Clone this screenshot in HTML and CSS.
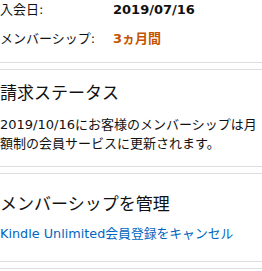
FILE: index.html
```html
<!DOCTYPE html>
<html lang="ja">
<head>
    <meta charset="UTF-8">
    <meta name="viewport" content="width=device-width, initial-scale=1.0">
    <title>メンバーシップ</title>
    <link rel="stylesheet" href="styles.css">
</head>
<body>
    <div class="info">
        <div class="row">
            <span class="label">入会日:</span>
            <span class="value">2019/07/16</span>
        </div>
        <div class="row">
            <span class="label">メンバーシップ:</span>
            <span class="value plan">3ヵ月間</span>
        </div>
    </div>

    <div class="section billing">
        <h2>請求ステータス</h2>
        <p>2019/10/16にお客様のメンバーシップは月額制の会員サービスに更新されます。</p>
    </div>

    <div class="section manage">
        <h2>メンバーシップを管理</h2>
        <a href="#">Kindle Unlimited会員登録をキャンセル</a>
    </div>

    <div class="section next"></div>
</body>
</html>
```

FILE: styles.css
```css
body {
    margin: 0;
    font-family: "DejaVu Sans", "Noto Sans CJK JP", sans-serif;
    font-size: 13px;
    line-height: 19px;
    color: #111;
    background-color: #fff;
}
.info {
    display: grid;
    grid-template-columns: 113px 1fr;
    row-gap: 9px;
    line-height: 20px;
    padding-bottom: 13px;
    border-bottom: 1px solid #ddd;
    margin-bottom: 6px;
}
.row {
    display: contents;
}
.value {
    font-weight: bold;
}
.plan {
    color: #c45500;
}
.section {
    border-top: 1px solid #ddd;
    border-bottom: 1px solid #ddd;
    margin-bottom: 6px;
}
.section h2 {
    margin: 0;
    font-size: 17px;
    font-weight: normal;
    line-height: 24px;
}
.billing {
    padding: 11px 0 13px;
}
.billing p {
    margin: 10px 0 0;
}
.manage {
    padding: 18px 0 18px;
}
.manage a {
    display: block;
    margin-top: 8px;
    color: #0066c0;
    text-decoration: none;
    font-size: 12.8px;
}
.next {
    border-bottom: none;
    margin-bottom: 0;
    height: 1px;
}
```
